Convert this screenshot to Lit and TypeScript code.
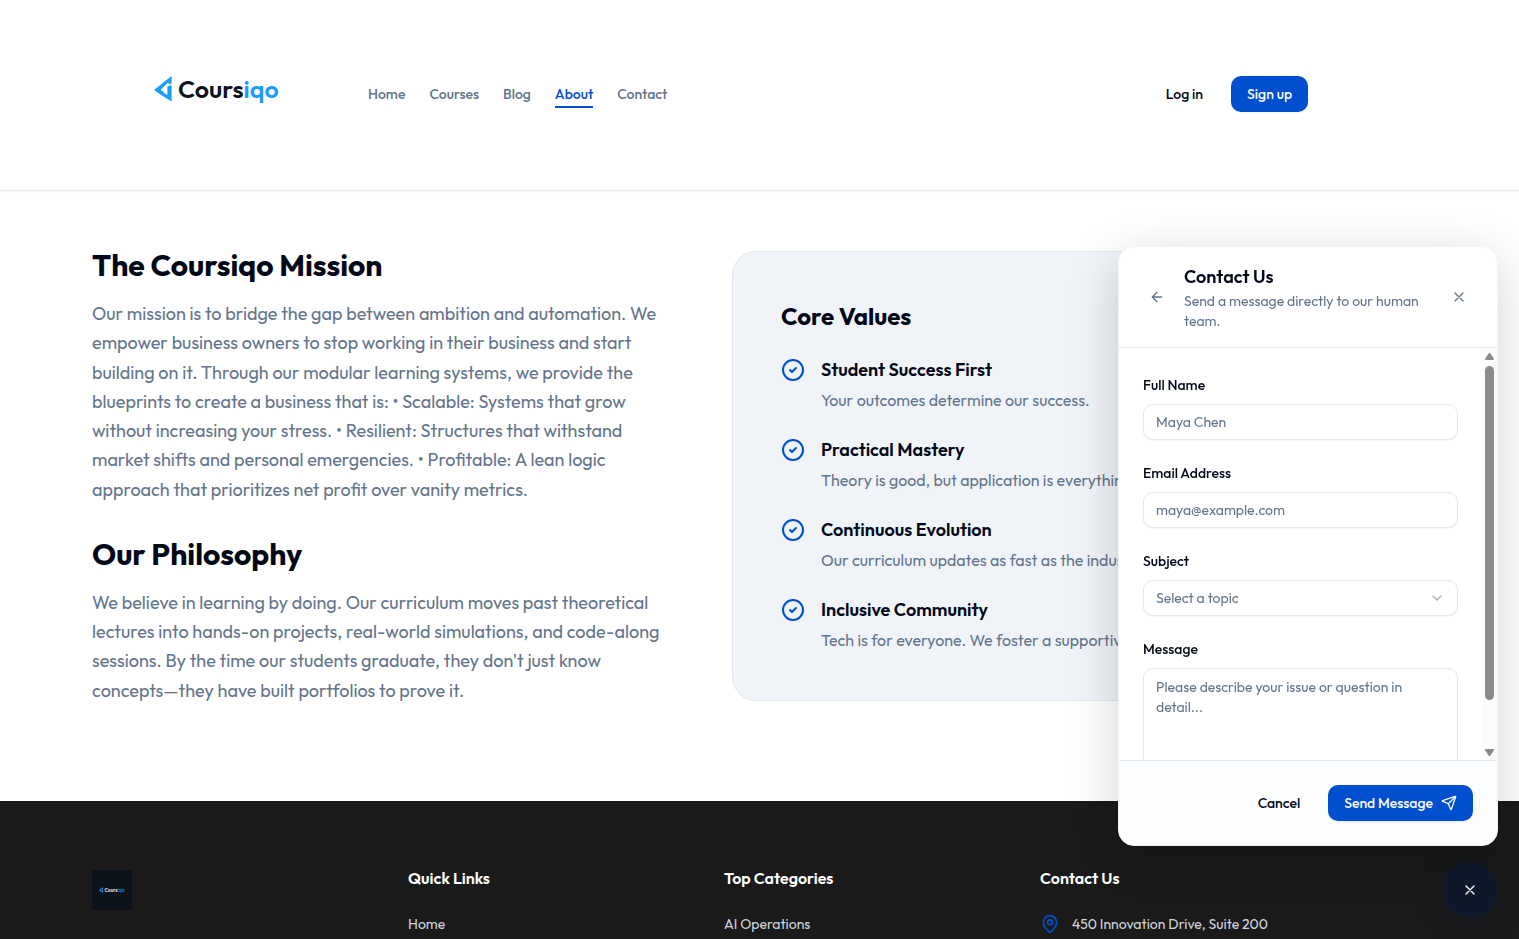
import { LitElement, html, css } from "lit";
import { customElement } from "lit/decorators.js";

const NAV = ["Home", "Courses", "Blog", "About", "Contact"];

const VALUES = [
  ["Student Success First", "Your outcomes determine our success."],
  ["Practical Mastery", "Theory is good, but application is everything."],
  ["Continuous Evolution", "Our curriculum updates as fast as the industry."],
  ["Inclusive Community", "Tech is for everyone. We foster a supportive space."],
];

const MISSION =
  "Our mission is to bridge the gap between ambition and automation. We empower business owners to stop working in their business and start building on it. Through our modular learning systems, we provide the blueprints to create a business that is: • Scalable: Systems that grow without increasing your stress. • Resilient: Structures that withstand market shifts and personal emergencies. • Profitable: A lean logic approach that prioritizes net profit over vanity metrics.";

const PHILOSOPHY =
  "We believe in learning by doing. Our curriculum moves past theoretical lectures into hands-on projects, real-world simulations, and code-along sessions. By the time our students graduate, they don't just know concepts—they have built portfolios to prove it.";

const base = css`
  *, *::before, *::after { box-sizing: border-box; }
  h2, h3, h4, p, ul { margin: 0; padding: 0; }
  ul { list-style: none; }
  a { color: inherit; text-decoration: none; }
  button, input, select, textarea { font: inherit; color: inherit; margin: 0; }
  button { border: 0; background: none; padding: 0; cursor: pointer; }
  svg { display: block; flex: none; }
  .icon { fill: none; stroke: currentColor; stroke-width: 2; stroke-linecap: round; stroke-linejoin: round; }
  .btn {
    display: inline-flex; align-items: center; justify-content: center; gap: 8px;
    height: 36px; padding: 0 16px; border-radius: 10px;
    font-size: 14px; line-height: 20px; font-weight: 500; white-space: nowrap;
  }
  .primary { background: #004fce; color: #f8fafc; box-shadow: 0 1px 2px rgba(0, 0, 0, 0.06); }
`;

const mark = html`<svg width="18" height="26" viewBox="0 0 18 26" aria-hidden="true">
  <path fill="#1a9cf8" d="M17.600 0v7.400l-2.200.8-1.200-1.600L6.600 13.800l3.600 2.800-2.600 2.600L0 13.900Z" />
  <path fill="#1a9cf8" d="M17.600 9v16.600L6.400 18.600l2.600-2.200 4.400 2.600V10.600Z" />
</svg>`;

const cross = html`<svg class="icon" width="16" height="16" viewBox="0 0 24 24" aria-hidden="true"><path d="M18 6 6 18M6 6l12 12" /></svg>`;

@customElement("site-header")
class SiteHeader extends LitElement {
  static styles = [base, css`
    :host { display: block; border-bottom: 1px solid #eceef6; box-shadow: 0 1px 2px rgba(0, 0, 0, 0.05); }
    .outer { max-width: 1399px; margin: 0 auto; }
    .bar { display: flex; align-items: center; max-width: 1280px; height: 190px; padding: 0 32px 2px; }
    .logo { display: flex; align-items: center; gap: 6px; width: 276px; padding: 0 0 10px 62px; color: #10131f; font-size: 25px; line-height: 32px; font-weight: 600; }
    .tail { color: #1a9cf8; }
    nav { display: flex; gap: 24px; font-size: 14px; line-height: 20px; font-weight: 500; color: #64748b; }
    nav a { padding: 4px 0 2px; border-bottom: 2px solid transparent; }
    nav .on { color: #004fce; border-color: #004fce; }
    .account { display: flex; align-items: center; gap: 12px; margin-left: auto; color: #020817; }
  `];
  render() {
    return html`<div class="outer"><div class="bar">
      <a class="logo" href="#">${mark}<span>Cours<span class="tail">iqo</span></span></a>
      <nav aria-label="Main">${NAV.map((n) => html`<a href="#" class=${n === "About" ? "on" : ""}>${n}</a>`)}</nav>
      <div class="account"><a class="btn" href="#">Log in</a><a class="btn primary" href="#">Sign up</a></div>
    </div></div>`;
  }
}

@customElement("about-section")
class AboutSection extends LitElement {
  static styles = [base, css`
    :host { display: block; }
    .outer { max-width: 1399px; margin: 0 auto; }
    .grid { display: grid; grid-template-columns: 1fr 1fr; gap: 64px; align-items: start; max-width: 1280px; padding: 60px 32px 96px; }
    .story { display: grid; gap: 36px; }
    h2 { margin-bottom: 20px; font-size: 30px; line-height: 28px; font-weight: 700; color: #020817; }
    .story p { font-size: 18px; line-height: 1.625; color: #64748b; }
    .card { padding: 48px; border: 1px solid #e2e8f0; border-radius: 24px; background: #f0f4f9; }
    h3 { margin-bottom: 24px; font-size: 24px; line-height: 32px; font-weight: 700; }
    .card ul { display: grid; gap: 24px; }
    li { display: flex; gap: 16px; }
    .check { margin-top: 2px; color: #004fce; }
    h4 { margin: 0 0 4px; font-size: 18px; line-height: 28px; font-weight: 600; }
    li p { font-size: 16px; line-height: 24px; color: #64748b; }
  `];
  render() {
    return html`<div class="outer"><div class="grid">
      <div class="story">
        <section><h2>The Coursiqo Mission</h2><p>${MISSION}</p></section>
        <section><h2>Our Philosophy</h2><p>${PHILOSOPHY}</p></section>
      </div>
      <section class="card">
        <h3>Core Values</h3>
        <ul>${VALUES.map(([t, d]) => html`<li>
          <svg class="icon check" width="24" height="24" viewBox="0 0 24 24" aria-hidden="true"><circle cx="12" cy="12" r="10" /><path d="m9 12 2 2 4-4" /></svg>
          <div><h4>${t}</h4><p>${d}</p></div></li>`)}</ul>
      </section>
    </div></div>`;
  }
}

@customElement("site-footer")
class SiteFooter extends LitElement {
  static styles = [base, css`
    :host { display: block; flex: 1; background: #1a1a1a; color: #d1d5db; }
    .outer { max-width: 1399px; margin: 0 auto; }
    .grid { display: grid; grid-template-columns: repeat(4, 1fr); gap: 48px; max-width: 1280px; padding: 64px 32px 0; }
    .badge { display: flex; align-items: center; justify-content: center; gap: 1px; width: 40px; height: 40px; margin-top: 5px; background: #0d131b; color: #e5e7eb; font-size: 5px; line-height: 8px; font-weight: 600; }
    .badge svg { width: 4px; height: 6px; }
    .tail { color: #1583c8; }
    h4 { margin: 0 0 23px; font-size: 16px; line-height: 26px; font-weight: 600; color: #fff; }
    .row { display: flex; align-items: center; gap: 12px; font-size: 14px; line-height: 20px; }
    .pin { color: #004fce; }
  `];
  render() {
    return html`<div class="outer"><div class="grid">
      <div><a class="badge" href="#">${mark}<span>Cours<span class="tail">iqo</span></span></a></div>
      <div><h4>Quick Links</h4><a class="row" href="#">Home</a></div>
      <div><h4>Top Categories</h4><a class="row" href="#">AI Operations</a></div>
      <div><h4>Contact Us</h4><div class="row">
        <svg class="icon pin" width="20" height="20" viewBox="0 0 24 24" aria-hidden="true"><path d="M20 10c0 4.993-5.539 10.193-7.399 11.799a1 1 0 0 1-1.202 0C9.539 20.193 4 14.993 4 10a8 8 0 0 1 16 0" /><circle cx="12" cy="10" r="3" /></svg>
        <span>450 Innovation Drive, Suite 200</span></div></div>
    </div></div>`;
  }
}

@customElement("contact-panel")
class ContactPanel extends LitElement {
  static styles = [base, css`
    :host { position: fixed; right: 21px; bottom: 21px; display: flex; flex-direction: column; align-items: flex-end; gap: 16px; }
    .panel { display: flex; flex-direction: column; width: 380px; height: 600px; overflow: hidden; border: 1px solid #f1f5f9; border-radius: 16px; background: #fff; box-shadow: 0 12px 50px rgba(0, 0, 0, 0.18); }
    header { display: flex; align-items: center; gap: 13px; padding: 16px 24px; border-bottom: 1px solid #e2e8f0; }
    .heading { flex: 1; }
    h3 { font-size: 18px; line-height: 28px; font-weight: 600; }
    header p { font-size: 14px; line-height: 20px; color: #64748b; }
    .tool { display: grid; place-items: center; width: 28px; height: 28px; color: #64748b; }
    .body { flex: 1; display: flex; min-height: 0; overflow: hidden; }
    form { flex: 1; display: flex; flex-direction: column; gap: 20px; padding: 24px; font-size: 14px; line-height: 20px; }
    .field { display: flex; flex-direction: column; gap: 6px; flex: none; }
    label { line-height: 26px; font-weight: 500; }
    .control { width: 100%; height: 36px; padding: 0 12px; border: 1px solid #e2e8f0; border-radius: 10px; background: #fff; box-shadow: 0 1px 2px rgba(0, 0, 0, 0.05); outline: 0; }
    .control::placeholder { color: #64748b; opacity: 1; }
    textarea.control { display: block; height: 120px; padding: 8px 12px; resize: none; overflow: hidden; }
    .pick { display: grid; align-items: center; }
    .pick > * { grid-area: 1 / 1; }
    select.control { appearance: none; color: #64748b; }
    .pick svg { justify-self: end; margin-right: 13px; color: #a8b1bf; pointer-events: none; }
    .track { display: flex; flex-direction: column; align-items: center; width: 15px; padding: 5px 0 4px; background: #fcfcfc; color: #8b8b8b; }
    .thumb { width: 9px; height: 334px; margin: 6px 0 auto; border-radius: 5px; background: #8b8b8b; }
    footer { display: flex; justify-content: flex-end; gap: 12px; padding: 24px; border-top: 1px solid #e2e8f0; background: #fbfdff; }
    .fab { display: grid; place-items: center; width: 56px; height: 56px; border-radius: 50%; background: #0f172a; color: #fff; box-shadow: 0 8px 30px rgba(15, 23, 42, 0.3); }
  `];
  render() {
    return html`
      <section class="panel" aria-label="Contact Us">
        <header>
          <button class="tool" aria-label="Back"><svg class="icon" width="16" height="16" viewBox="0 0 24 24" aria-hidden="true"><path d="m12 19-7-7 7-7M19 12H5" /></svg></button>
          <div class="heading"><h3>Contact Us</h3><p>Send a message directly to our human team.</p></div>
          <button class="tool" aria-label="Close">${cross}</button>
        </header>
        <div class="body">
          <form id="contact">
            <div class="field"><label for="name">Full Name</label><input class="control" id="name" placeholder="Maya Chen" /></div>
            <div class="field"><label for="email">Email Address</label><input class="control" id="email" type="email" placeholder="maya@example.com" /></div>
            <div class="field"><label for="subject">Subject</label><div class="pick">
              <select class="control" id="subject"><option>Select a topic</option></select>
              <svg class="icon" width="16" height="16" viewBox="0 0 24 24" aria-hidden="true"><path d="m6 9 6 6 6-6" /></svg></div></div>
            <div class="field"><label for="message">Message</label><textarea class="control" id="message" placeholder="Please describe your issue or question in detail..."></textarea></div>
          </form>
          <div class="track" aria-hidden="true">
            <svg width="9" height="7" viewBox="0 0 9 7"><path fill="currentColor" d="M3.6.6a1.1 1.1 0 0 1 1.8 0L8.8 5.400C9.200 6.200 8.800 7 8 7H1C.2 7-.2 6.200.2 5.400Z" /></svg>
            <div class="thumb"></div>
            <svg width="9" height="7" viewBox="0 0 9 7"><path fill="currentColor" d="M3.6 6.400a1.1 1.1 0 0 0 1.8 0L8.800 1.600C9.200.8 8.800 0 8 0H1C.2 0-.2.8.2 1.600Z" /></svg>
          </div>
        </div>
        <footer>
          <button class="btn">Cancel</button>
          <button class="btn primary" form="contact">Send Message
            <svg class="icon" width="16" height="16" viewBox="0 0 24 24" aria-hidden="true"><path d="M14.536 21.686a.5.5 0 0 0 .937-.024l6.5-19a.496.496 0 0 0-.635-.635l-19 6.500a.5.5 0 0 0-.024.937l7.930 3.180a2 2 0 0 1 1.112 1.110z" /><path d="m21.854 2.147-10.940 10.939" /></svg>
          </button>
        </footer>
      </section>
      <button class="fab" aria-label="Close contact panel">${cross}</button>`;
  }
}

@customElement("app-root")
class AppRoot extends LitElement {
  static styles = css`
    :host { display: flex; flex-direction: column; min-height: 100vh; background: #fff; color: #020817; font-family: Outfit, Lato, sans-serif; }
  `;
  render() {
    return html`<site-header></site-header><about-section></about-section><site-footer></site-footer><contact-panel></contact-panel>`;
  }
}
